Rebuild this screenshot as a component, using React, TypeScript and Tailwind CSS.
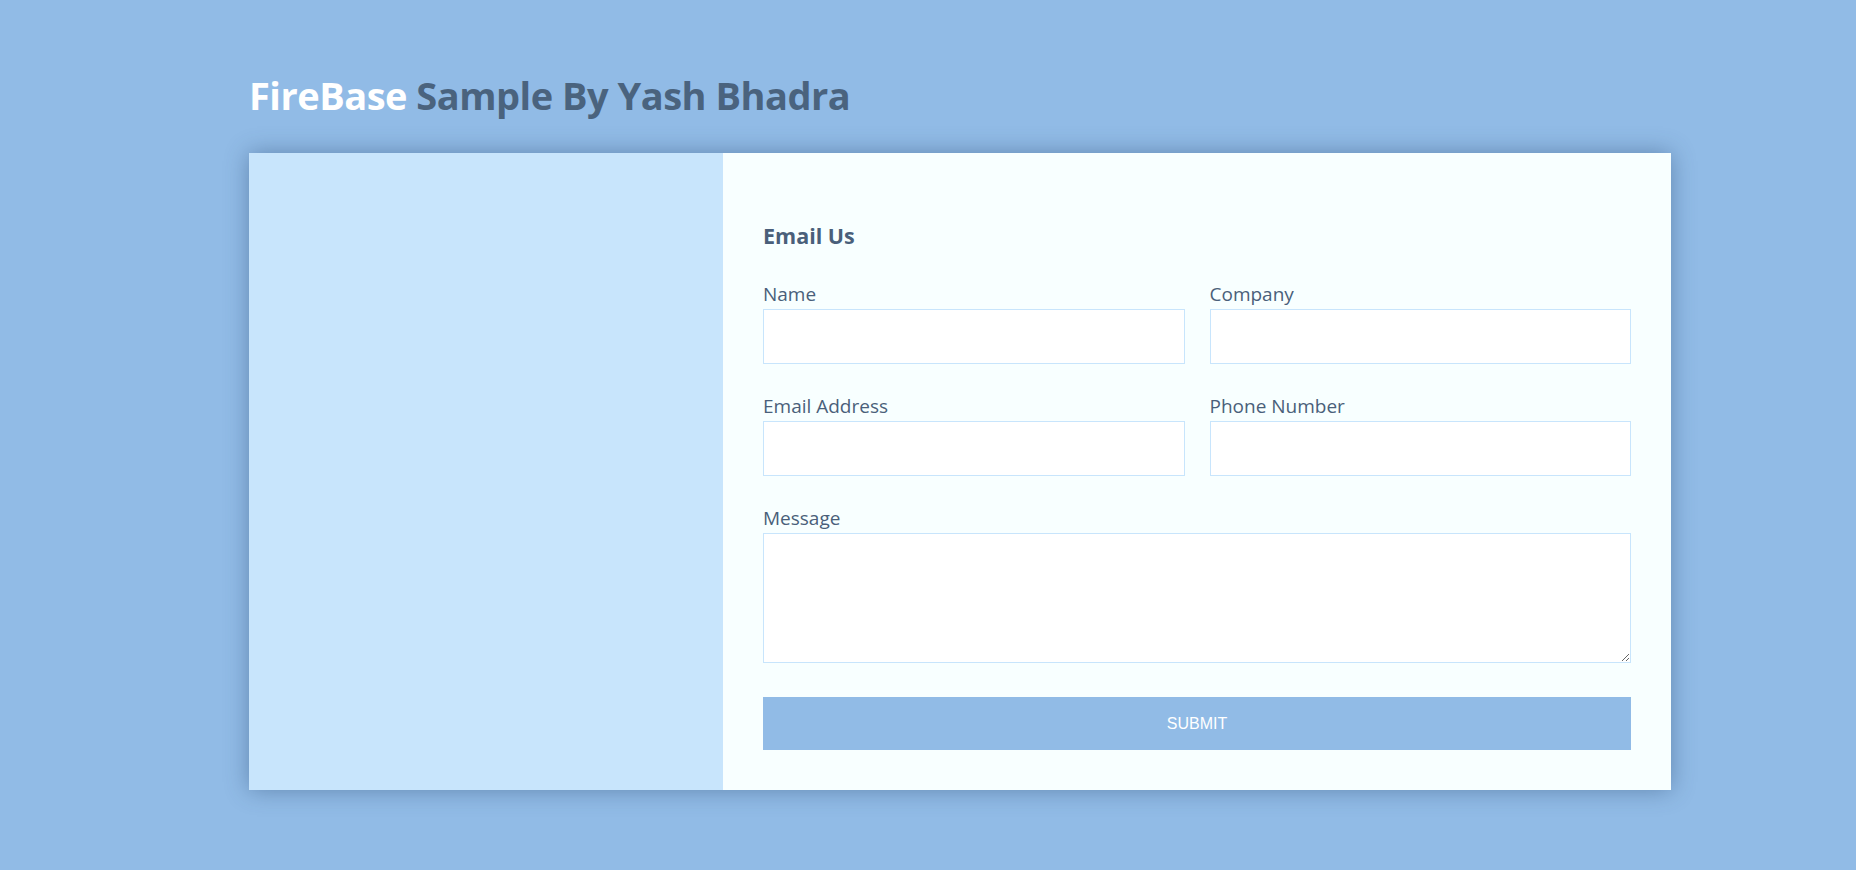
import React from "react";

const fields = [
  { label: "Name", type: "text" },
  { label: "Company", type: "text" },
  { label: "Email Address", type: "email" },
  { label: "Phone Number", type: "tel" },
];

export default function App() {
  return (
    <div className="min-h-screen bg-[#91bbe6] pt-[70px] font-['Open_Sans',sans-serif]">
      <div className="ml-[249px] w-[1422px]">
        {/* Title */}
        <h1 className="text-[38px] leading-[50px] font-bold text-[#4a637e] mb-[33px] tracking-[-0.5px]">
          <span className="text-white">FireBase</span> Sample By Yash Bhadra
        </h1>

        {/* Card */}
        <div className="grid grid-cols-[474px_1fr] shadow-[0_0_22px_rgba(40,70,110,0.45)]">
          <div className="bg-[#c8e5fc]" />
          <div className="bg-[#f8ffff] px-[40px] pt-[70px] pb-[40px]">
            <h3 className="text-[21.5px] leading-[26px] font-bold text-[#4a5f7a] mb-[33px]">Email Us</h3>
            <form className="grid grid-cols-2 gap-x-[25px] gap-y-[30px] text-[#4a5f7a]">
              {fields.map((f) => (
                <label key={f.label} className="block">
                  <span className="block text-[19px] leading-[24px]">{f.label}</span>
                  <input
                    type={f.type}
                    className="block w-full h-[55px] mt-[3px] bg-white border border-[#c8e5fc] outline-none px-3"
                  />
                </label>
              ))}
              <label className="block col-span-2">
                <span className="block text-[19px] leading-[24px]">Message</span>
                <textarea className="block w-full h-[130px] mt-[3px] bg-white border border-[#c8e5fc] outline-none px-3" />
              </label>
              <button
                type="button"
                className="col-span-2 h-[53px] mt-[4px] bg-[#91bbe6] text-white text-[16px] font-['Liberation_Sans',sans-serif] uppercase"
              >
                Submit
              </button>
            </form>
          </div>
        </div>
      </div>
    </div>
  );
}
